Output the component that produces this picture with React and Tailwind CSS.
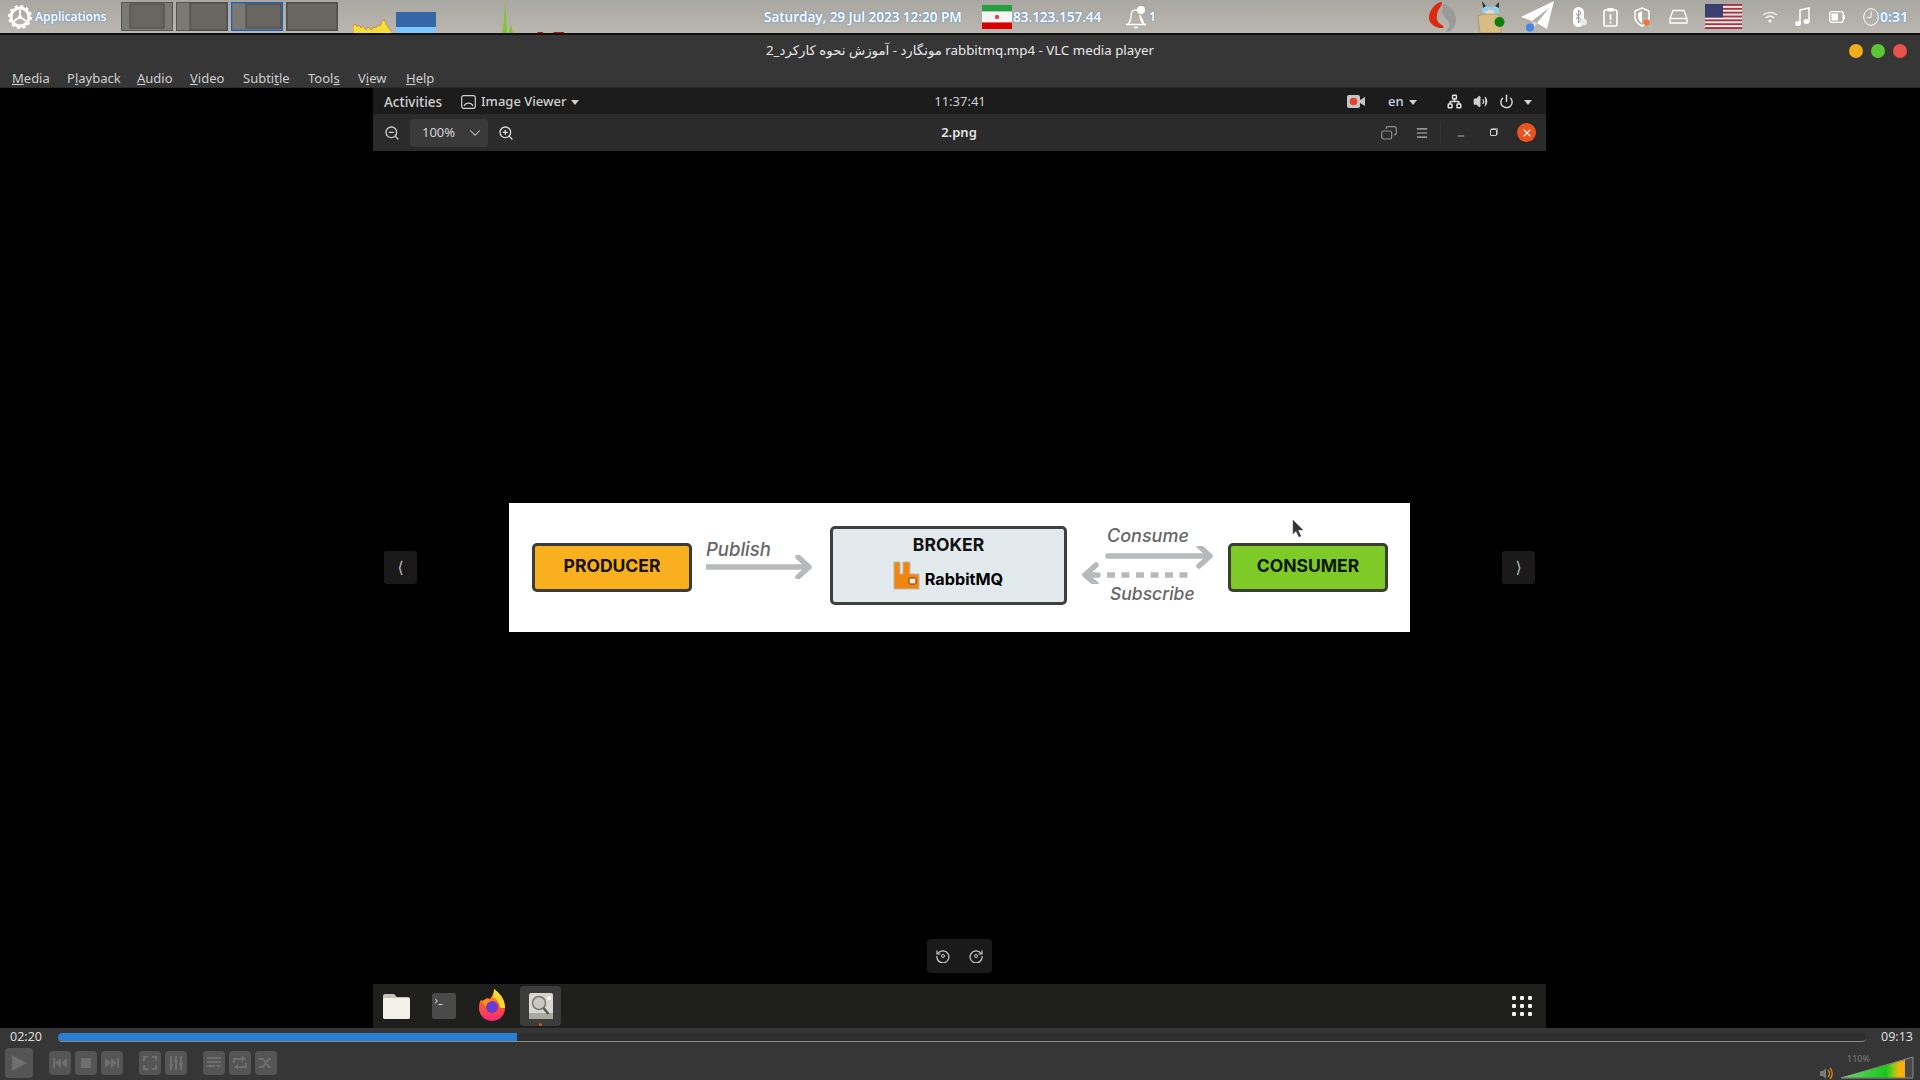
import React from "react";
import { ZoomIn, ZoomOut, ChevronDown, Menu as MenuIcon, X, Minus, Volume2, Power, Network } from "lucide-react";

const Gear = () => (
  <svg width="24" height="26" viewBox="0 0 24 26" fill="none" className="ml-[8px] shrink-0">
    <circle cx="12" cy="13" r="9" stroke="#fff" strokeWidth="3" />
    <circle cx="12" cy="13" r="11" stroke="#fff" strokeWidth="2" strokeDasharray="3 2.76" />
    <path d="M12 13V6M12 13l6 4M12 13l-6 4" stroke="#fff" strokeWidth="2" />
    <circle cx="12" cy="13" r="2" fill="#fff" />
  </svg>
);

const Workspace = ({ active, x, y, w, h }) => (
  <svg width="52" height="29" viewBox="0 0 52 29" className="shrink-0">
    <rect x="0.5" y="0.5" width="51" height="28" fill="#7b7974" stroke={active ? "#1f5fc0" : "#565552"} strokeWidth={active ? 1.5 : 1} />
    <rect x={x} y={y} width={w} height={h} fill="#686661" stroke="#4a4946" strokeWidth="1" />
  </svg>
);

const Graphs = () => (
  <svg width="212" height="35" viewBox="0 0 212 35" className="ml-[15px] self-start shrink-0">
    <path d="M0 35V26L2 24L4 27L6 25L8 28L10 26L13 30L15 27L17 29L19 30L21 27L23 28L25 25L27 26L29 22L31 19L33 24L35 27L37 30L39 32L40 35z" fill="#f7df3a" stroke="#d9662a" strokeWidth="0.6" />
    <rect x="43" y="12" width="40" height="15" fill="#3566a8" />
    <rect x="43" y="27" width="40" height="8" fill="#7cc8fb" />
    <path d="M148 35l2-6 1-10 1-19 1 14 1 18 1 3 2-7 1-4 1 4 2 7z" fill="#82c627" />
    <path d="M142 35h3l1-2 1 2zM172 35v-2h12l1-1h5v1h10l1-1h10v3z" fill="#c40d0d" />
    <rect x="0" y="33.5" width="212" height="1.5" fill="#000" opacity="0.15" />
  </svg>
);

const IranFlag = () => (
  <svg width="30" height="24" viewBox="0 0 30 24" className="ml-[22px] shrink-0">
    <rect width="30" height="6.5" fill="#239f40" />
    <rect y="6.5" width="30" height="11" fill="#f4f4f4" />
    <rect y="17.5" width="30" height="6.5" fill="#da0000" />
    <circle cx="15" cy="12" r="2.2" fill="#da4a4a" />
  </svg>
);

const Bell = () => (
  <svg width="22" height="24" viewBox="0 0 22 24" fill="none" className="ml-[23px] shrink-0">
    <path d="M3 19c2-2 3-4 3-8s2-6 5-6c1 0 2 .3 3 1M15 10c0 4 1 7 4 9z" stroke="#fff" strokeWidth="1.3" />
    <path d="M1 19.5h20M9 22.5h4" stroke="#fff" strokeWidth="1.3" />
    <circle cx="16" cy="5" r="4" fill="#fff" />
  </svg>
);

const Swirl = () => (
  <svg width="29" height="32" viewBox="0 0 29 32" className="ml-[274px] shrink-0">
    <path d="M16 3c5 1 12 7 12 16 0 7-5 12-9 12-1 0-1-1 0-2 3-3 3-6 1-9-2-3-5-5-6-9 0-3 1-8 2-8z" fill="#9b9a97" />
    <path d="M13 1C6 3 1 10 1 17c0 5 5 9 11 10 4 .5 5-1 2-3-4-2-6-5-5-9 0-5 3-8 5-12 0-1 0-2-1-2z" fill="#dc2a10" />
  </svg>
);

const BoxGirl = () => (
  <svg width="28" height="32" viewBox="0 0 28 32" className="ml-[21px] shrink-0">
    <path d="M4 1l4 5h8l5-4v8l-3 9H7L4 10z" fill="#8fd0ea" />
    <path d="M4 0l4 5-3 2zM21 1l-4 4 4 2z" fill="#3c3030" />
    <ellipse cx="12" cy="13" rx="5" ry="4" fill="#f2d8cc" />
    <path d="M0 15l5-2h13l5 3v16H2z" fill="#d8bd82" stroke="#9c8555" strokeWidth="0.6" />
    <circle cx="21.5" cy="21" r="5" fill="#0c7d0c" />
  </svg>
);

const Telegram = () => (
  <svg width="34" height="31" viewBox="0 0 34 31" className="ml-[15px] shrink-0">
    <path d="M0 16L33 0l-7 28-10-6 12-15-17 13z" fill="#fff" />
    <path d="M11 20l3 6 2-4z" fill="#dcdcdc" />
    <circle cx="9" cy="26.5" r="4" fill="#4286ec" />
  </svg>
);

const Bt = () => (
  <svg width="14" height="22" viewBox="0 0 14 22" className="ml-[18px] shrink-0">
    <rect x="0" y="1" width="11" height="20" rx="5.5" fill="#fff" />
    <path d="M3 7l5 7-2.500 3V4l2.500 3-5 6" stroke="#9a9994" strokeWidth="1" fill="none" />
    <circle cx="10.500" cy="16" r="3.500" fill="#e8e8e8" />
  </svg>
);

const Clip = () => (
  <svg width="15" height="20" viewBox="0 0 15 20" fill="none" className="ml-[16px] shrink-0">
    <rect x="1" y="3" width="13" height="16" rx="1.500" stroke="#fff" strokeWidth="1.600" />
    <rect x="4.500" y="1" width="6" height="3.500" fill="#fff" />
    <path d="M7.500 7v6M7.500 14.500v2" stroke="#fff" strokeWidth="1.800" />
  </svg>
);

const Shield = () => (
  <svg width="16" height="20" viewBox="0 0 16 20" fill="none" className="ml-[16px] shrink-0">
    <path d="M8 1l7 3v6c0 4-3 7-7 9-4-2-7-5-7-9V4z" stroke="#fff" strokeWidth="1.500" />
    <path d="M8 4v12c-3-2-4-4-4-7V6z" fill="#fff" />
    <circle cx="12.500" cy="15.500" r="3" fill="#f0752f" />
  </svg>
);

const Disk = () => (
  <svg width="19" height="16" viewBox="0 0 19 16" fill="none" className="ml-[19px] shrink-0">
    <path d="M4 1.500h11l3 8v4.500H1V9.500z" stroke="#fff" strokeWidth="1.300" />
    <path d="M1 9.500h17" stroke="#fff" strokeWidth="1.300" />
  </svg>
);

const UsFlag = () => {
  const stripes = [0, 2, 4, 6, 8, 10, 12];
  return (
    <svg width="37" height="25" viewBox="0 0 37 25" className="ml-[17px] shrink-0">
      <rect width="37" height="25" rx="2" fill="#eee" />
      {stripes.map((s) => (
        <rect key={s} y={s * 1.923} width="37" height="1.923" fill="#a8343f" />
      ))}
      <rect width="18" height="13.500" fill="#3c3f70" />
    </svg>
  );
};

const Wifi = () => (
  <svg width="16" height="12" viewBox="0 0 16 12" fill="none" className="ml-[20px] shrink-0">
    <path d="M1 4c4-3.500 10-3.500 14 0M3.500 7c3-2.500 6-2.500 9 0" stroke="#eee" strokeWidth="1.500" />
    <circle cx="8" cy="10" r="1.500" fill="#fff" />
  </svg>
);

const Note = () => (
  <svg width="15" height="20" viewBox="0 0 15 20" fill="none" className="ml-[17px] shrink-0">
    <path d="M5 16V3l9-2v13" stroke="#fff" strokeWidth="1.500" />
    <ellipse cx="3" cy="16.500" rx="3" ry="2.500" fill="#fff" />
    <ellipse cx="11.500" cy="14.500" rx="3" ry="2.500" fill="#fff" />
  </svg>
);

const Batt = () => (
  <svg width="16" height="12" viewBox="0 0 16 12" fill="none" className="ml-[19px] shrink-0">
    <rect x="0.700" y="0.700" width="13.500" height="10.600" rx="2" stroke="#fff" strokeWidth="1.300" />
    <rect x="2.500" y="2.500" width="6.500" height="7" fill="#fff" />
    <rect x="14.500" y="4" width="1.500" height="4" fill="#fff" />
  </svg>
);

const ClockIcon = () => (
  <svg width="16" height="18" viewBox="0 0 16 18" fill="none" className="ml-[18px] shrink-0">
    <ellipse cx="8" cy="9" rx="7.300" ry="8.300" stroke="#fff" strokeWidth="1" />
    <path d="M8 3.500V9.500H3.500" stroke="#fff" strokeWidth="1" />
  </svg>
);

const TopPanel = () => (
  <div className="h-[33px] flex items-center bg-gradient-to-b from-[#a9a7a1] to-[#bab7b0] font-['Open_Sans','DejaVu_Sans',sans-serif] [text-shadow:0_0_2px_#3f8fdf] text-white">
    <Gear />
    <span className="ml-[3px] w-[71px] text-[12px] font-semibold whitespace-nowrap">Applications</span>
    <div className="ml-[15px] flex gap-[3px]">
      <Workspace x={9} y={2} w={34} h={24} />
      <Workspace x={14} y={1} w={37} h={27} />
      <Workspace active x={15} y={2} w={35} h={24} />
      <Workspace x={1} y={1} w={50} h={27} />
    </div>
    <Graphs />
    <span className="ml-[199px] w-[196px] text-[13.500px] font-semibold whitespace-nowrap pt-[1px]">Saturday, 29 Jul 2023 12:20 PM</span>
    <IranFlag />
    <span className="ml-[1px] w-[89px] text-[13.500px] font-semibold pt-[1px]">83.123.157.44</span>
    <Bell />
    <span className="ml-[2px] w-[5px] text-[12px] font-semibold">1</span>
    <Swirl />
    <BoxGirl />
    <Telegram />
    <Bt />
    <Clip />
    <Shield />
    <Disk />
    <UsFlag />
    <Wifi />
    <Note />
    <Batt />
    <ClockIcon />
    <span className="ml-[1px] text-[14px] font-bold text-[#e4f2ff] whitespace-nowrap">0:31</span>
  </div>
);

const Dot = ({ c }) => <span className={c} />;

const TitleBar = () => (
  <div className="relative h-[31px] flex items-center justify-center text-[13.300px] text-[#e8e8e8]">
    <span dir="ltr" className="font-['Noto_Sans','DejaVu_Sans',sans-serif] pt-[1px]">مونگارد - آموزش نحوه کارکرد_2 rabbitmq.mp4 - VLC media player</span>
    <div className="absolute right-[13px] top-[9px] flex gap-[8px]">
      <Dot c="w-[14px] h-[14px] rounded-full bg-[#f0ae19]" />
      <Dot c="w-[14px] h-[14px] rounded-full bg-[#5bc734]" />
      <Dot c="w-[14px] h-[14px] rounded-full bg-[#e9524f]" />
    </div>
  </div>
);

const MenuBar = () => (
  <div className="h-[22px] pt-[4px] border-b border-[#2b2b2b] flex items-center pl-[12px] gap-[19px] text-[13px] text-[#cfcfcf] font-['Noto_Sans',sans-serif]">
    <span className="w-[36px]"><span className="underline">M</span>edia</span>
    <span className="w-[51px] whitespace-nowrap">P<span className="underline">l</span>ayback</span>
    <span className="w-[34px]"><span className="underline">A</span>udio</span>
    <span className="w-[34px]"><span className="underline">V</span>ideo</span>
    <span className="w-[46px]">Subti<span className="underline">t</span>le</span>
    <span className="w-[31px]">Tool<span className="underline">s</span></span>
    <span className="w-[29px]">V<span className="underline">i</span>ew</span>
    <span className="w-[27px]"><span className="underline">H</span>elp</span>
  </div>
);

const Caret = () => (
  <svg width="8" height="5" viewBox="0 0 8 5" className="shrink-0"><path d="M0 0h8L4 5z" fill="#cfcfcf" /></svg>
);

const ActivitiesBar = () => (
  <div className="h-[26px] pt-[2px] bg-[#1c1c1c] flex items-center relative text-[13px] font-medium text-[#d2d2d2] font-['Noto_Sans',sans-serif]">
    <span className="ml-[11px] w-[58px] whitespace-nowrap text-[13.500px]">Activities</span>
    <svg width="15" height="14" viewBox="0 0 15 14" fill="none" className="ml-[19px]">
      <rect x="0.700" y="0.700" width="13.600" height="12.600" rx="2" stroke="#cfcfcf" strokeWidth="1.200" />
      <path d="M3 11a5 5 0 0 1 9 0" stroke="#cfcfcf" strokeWidth="1.200" />
    </svg>
    <span className="ml-[5px] w-[84px] whitespace-nowrap">Image Viewer</span>
    <span className="ml-[6px]"><Caret /></span>
    <span className="absolute left-[557px] top-[4px] w-[60px] text-center font-normal text-[13px]">11:37:41</span>
    <div className="ml-auto flex items-center pr-[14px]">
      <svg width="18" height="13" viewBox="0 0 18 13" className="mt-[-2px] ml-[1px]">
        <rect width="13" height="13" rx="2" fill="#c5c5c5" />
        <circle cx="6.500" cy="6.500" r="3.800" fill="#e8402a" />
        <path d="M13 5l5-3v9l-5-3z" fill="#c5c5c5" />
      </svg>
      <span className="ml-[23px] w-[15px] text-[13px] text-[#c9d6e4]">en</span>
      <span className="ml-[6px]"><Caret /></span>
      <Network size={15} color="#e0e0e0" strokeWidth={2.400} className="ml-[30px] mt-[-2px]" />
      <Volume2 size={15} color="#d0d0d0" fill="#d0d0d0" className="ml-[11px] mt-[-2px]" />
      <Power size={15} color="#e0e0e0" strokeWidth={2.200} className="ml-[11px] mt-[-2px]" />
      <span className="ml-[10px]"><Caret /></span>
    </div>
  </div>
);

const RestoreIcon = () => (
  <svg width="16" height="14" viewBox="0 0 16 14" fill="none">
    <rect x="0.700" y="5" width="10" height="8" rx="2" stroke="#8f8f8f" strokeWidth="1.200" />
    <path d="M5 3V2.500A1.800 1.800 0 0 1 6.800 .7H13.500A1.800 1.800 0 0 1 15.300 2.500V7A1.800 1.800 0 0 1 13.500 8.800H13" stroke="#8f8f8f" strokeWidth="1.200" />
  </svg>
);

const HeaderBar = () => (
  <div className="h-[37px] bg-[#2b2b2b] flex items-center relative text-[13px] text-[#d5d5d5] font-['Noto_Sans',sans-serif]">
    <ZoomOut size={16} color="#cfcfcf" className="ml-[11px]" />
    <div className="ml-[10px] w-[78px] h-[28px] rounded-[4px] bg-[#3a3a3a] flex items-center pl-[12px]">
      <span className="w-[33px]">100%</span>
      <ChevronDown size={18} color="#cfcfcf" strokeWidth={1.400} className="ml-[11px]" />
    </div>
    <ZoomIn size={16} color="#dcdcdc" className="ml-[10px]" />
    <span className="absolute left-[556px] top-[9px] w-[60px] text-center font-semibold text-[#e4e4e4]">2.png</span>
    <div className="ml-auto flex items-center pr-[10px]">
      <RestoreIcon />
      <MenuIcon size={14} color="#bcbcbc" className="ml-[18px]" />
      <span className="ml-[11px] w-px h-[20px] bg-[#333]" />
      <Minus size={10} color="#cfcfcf" strokeWidth={2} className="ml-[15px] mt-[6px]" />
      <span className="ml-[24px] w-[7px] h-[7px] border border-[#cfcfcf] rounded-[1px] shadow-[1px_-1px_0_#8a8a8a]" />
      <span className="ml-[20px] w-[19px] h-[19px] rounded-full bg-[#e95420] flex items-center justify-center">
        <X size={12} color="#fff" strokeWidth={2.200} />
      </span>
    </div>
  </div>
);

const ArrowRight = () => (
  <svg width="108" height="24" viewBox="0 0 108 24" fill="none" className="block">
    <path d="M1 12h102M92 2l11 10-11 10" stroke="#b7babc" strokeWidth="5.500" strokeLinecap="round" strokeLinejoin="round" />
  </svg>
);

const ConsumeArrows = () => (
  <svg width="132" height="38" viewBox="0 0 132 38" fill="none" className="block">
    <path d="M27 10h102M118 0l11 10-11 10" stroke="#b7babc" strokeWidth="5.500" strokeLinecap="round" strokeLinejoin="round" />
    <path d="M4 29l11-10M4 29l11 9M4 29h13" stroke="#b7babc" strokeWidth="5.500" strokeLinecap="round" strokeLinejoin="round" />
    <path d="M26 29h82" stroke="#b7babc" strokeWidth="5.500" strokeDasharray="8 6.500" />
  </svg>
);

const RabbitLogo = () => (
  <svg width="27" height="29" viewBox="0 0 27 29" className="shrink-0">
    <path d="M1 1h6v12h3V1h7v12h9v15H1z" fill="#f0860f" stroke="#b8b8b0" strokeWidth="1" />
    <rect x="16" y="17" width="7" height="6" rx="1" fill="#f3e8d5" stroke="#6d3f0a" strokeWidth="1" />
  </svg>
);

const Cursor = () => (
  <svg width="13" height="18" viewBox="0 0 13 18" className="absolute left-[783px] top-[17px]">
    <path d="M1 0v14l3-3 3 6 2-1-3-6h5z" fill="#333" stroke="#666" strokeWidth="0.500" />
  </svg>
);

const Diagram = () => (
  <div className="relative w-[901px] h-[129px] bg-white flex items-center font-['Inter',sans-serif]">
    <div className="ml-[23px] w-[160px] h-[49px] mb-[1px] border-[3px] border-[#3c3c38] rounded-[5px] bg-[#f8b01e] flex items-center justify-center text-[17.500px] font-bold text-[#15130c] pb-[1px]">PRODUCER</div>
    <div className="ml-[14px] w-[106px] self-start pt-[36px] flex flex-col">
      <span className="h-[20px] leading-[20px] text-[18.500px] italic font-medium text-[#666]">Publish</span>
      <span className="-mt-[4px]"><ArrowRight /></span>
    </div>
    <div className="ml-[18px] w-[237px] h-[79px] mb-[5px] border-[3px] border-[#3f3f3f] rounded-[5px] bg-[#e1e9ec] flex flex-col items-center text-black font-bold">
      <span className="mt-[5px] text-[17.500px] leading-[22px] text-[#111]">BROKER</span>
      <span className="mt-[4px] flex items-center gap-[5px] ml-[-1px]">
        <RabbitLogo />
        <span className="text-[16.200px] mt-[7px]">RabbitMQ</span>
      </span>
    </div>
    <div className="ml-[14px] w-[131px] self-start pt-[23px] flex flex-col">
      <span className="ml-[26px] h-[20px] leading-[20px] text-[18px] italic font-medium text-[#666]">Consume</span>
      <ConsumeArrows />
      <span className="ml-[29px] h-[20px] leading-[20px] text-[17.500px] italic font-medium text-[#666]">Subscribe</span>
    </div>
    <div className="ml-[16px] w-[160px] h-[49px] mb-[1px] border-[3px] border-[#3a3f30] rounded-[5px] bg-[#7ecb27] flex items-center justify-center text-[17.500px] font-bold text-[#0d1508] pb-[1px]">CONSUMER</div>
    <Cursor />
  </div>
);

const RotateIcon = ({ flip }) => (
  <svg width="14" height="14" viewBox="0 0 14 14" fill="none" className={flip ? "-scale-x-100" : ""}>
    <path d="M2 4.500A6 6 0 1 1 1 7" stroke="#cfcfcf" strokeWidth="1.200" />
    <path d="M1 1.500v3.500h3.500" stroke="#cfcfcf" strokeWidth="1.200" />
    <circle cx="7" cy="7" r="1.500" stroke="#cfcfcf" strokeWidth="1" />
  </svg>
);

const NavBtn = ({ cls, ch }) => (
  <div className={"absolute top-[400px] w-[33px] h-[33px] rounded-[3px] bg-[#1a1a1a] flex items-center justify-center " + cls}>
    {ch}
  </div>
);

const Folder = () => (
  <svg width="27" height="25" viewBox="0 0 27 25">
    <path d="M2 0h9l3 3h11a2 2 0 0 1 2 2v18a2 2 0 0 1-2 2H2a2 2 0 0 1-2-2V2a2 2 0 0 1 2-2z" fill="#c4c3b8" />
    <rect y="4" width="27" height="21" rx="2" fill="#f1f1e8" />
  </svg>
);

const Term = () => (
  <svg width="24" height="26" viewBox="0 0 24 26">
    <rect width="24" height="26" rx="2.500" fill="#4a4a4a" />
    <path d="M3 6l2.500 2L3 10" stroke="#ddd" strokeWidth="1" fill="none" />
    <path d="M6.500 11.500h4" stroke="#ddd" strokeWidth="1" />
  </svg>
);

const Firefox = () => (
  <svg width="27" height="33" viewBox="0 0 27 33">
    <defs>
      <linearGradient id="ff1" x1="0" y1="0" x2="0" y2="1">
        <stop offset="0" stopColor="#ffb01f" />
        <stop offset="0.500" stopColor="#ff5a27" />
        <stop offset="1" stopColor="#f0277f" />
      </linearGradient>
    </defs>
    <path d="M15 0c5 4 11 9 11 19a13 13 0 0 1-26 0c0-4 1-7 2-8 1 1 2 1 3 0 2-2 4-2 6-1 2-3 4-6 4-10z" fill="url(#ff1)" />
    <path d="M15 0c5 4 11 9 11 19l-5 0c0-6-4-9-7-11 1-3 1-5 1-8z" fill="#ffd92e" />
    <circle cx="13" cy="18" r="6" fill="#6a3bd0" />
    <path d="M3 13c3-3 7-3 9-1-3 1-5 3-5 6z" fill="#ff8f1f" />
  </svg>
);

const Viewer = () => (
  <svg width="24" height="26" viewBox="0 0 24 26" fill="none">
    <rect width="24" height="26" rx="2" fill="#d8d7cc" />
    <rect y="20" width="24" height="6" fill="#aaa99f" />
    <circle cx="10" cy="10" r="6.500" fill="#c9c8be" stroke="#777" strokeWidth="1.500" />
    <path d="M14.500 15l5 6" stroke="#555" strokeWidth="2.500" />
    <circle cx="20" cy="5" r="2" fill="#fff" />
  </svg>
);

const GridIcon = () => {
  const dots = [0, 1, 2, 3, 4, 5, 6, 7, 8];
  return (
    <div className="grid grid-cols-3 gap-[4px] w-[20px]">
      {dots.map((d) => (
        <span key={d} className="w-[4px] h-[4px] rounded-[1px] bg-[#f0f0f0]" />
      ))}
    </div>
  );
};

const Dock = () => (
  <div className="h-[44px] bg-[#1f1f1d] flex items-center">
    <span className="ml-[10px]"><Folder /></span>
    <span className="ml-[22px]"><Term /></span>
    <span className="ml-[23px] -mt-[1px]"><Firefox /></span>
    <div className="relative ml-[14px] w-[41px] h-[40px] rounded-[4px] bg-[#3c3c3c] flex items-center justify-center">
      <Viewer />
      <span className="absolute bottom-0 left-[19px] w-[3px] h-[3px] rounded-full bg-[#e95420]" />
    </div>
    <span className="ml-auto mr-[14px]"><GridIcon /></span>
  </div>
);

const Screen = () => (
  <div className="ml-[373px] w-[1173px] flex-1 flex flex-col min-h-0">
    <ActivitiesBar />
    <HeaderBar />
    <div className="relative flex-1 flex items-center justify-center bg-black">
      <Diagram />
      <NavBtn cls="left-[11px]" ch={<span className="text-[#bbb] text-[16px] font-['DejaVu_Sans',sans-serif]">⟨</span>} />
      <NavBtn cls="right-[11px]" ch={<span className="text-[#bbb] text-[16px] font-['DejaVu_Sans',sans-serif]">⟩</span>} />
      <div className="absolute left-[554px] top-[788px] w-[65px] h-[34px] rounded-[4px] bg-[#1a1a1a] flex items-center justify-center gap-[19px]">
        <RotateIcon />
        <RotateIcon flip />
      </div>
    </div>
    <Dock />
  </div>
);

const Ctrl = ({ children, cls }) => (
  <span className={"w-[22px] h-[24px] rounded-[4px] bg-[#555] flex items-center justify-center " + (cls || "")}>{children}</span>
);

const G = "#6f6f6f";

const Bottom = () => (
  <div className="h-[52px] bg-[#363636] flex flex-col font-['Noto_Sans',sans-serif]">
    <div className="h-[18px] flex items-center">
      <span className="ml-[10px] w-[48px] text-[12.500px] text-[#dcdcdc]">02:20</span>
      <div className="flex-1 h-[9px] rounded-[4px] bg-[#2f2f2f] border-b border-[#8a8a8a] overflow-hidden">
        <div className="w-[459px] h-full bg-[#2a7fd5] rounded-l-[4px]" />
      </div>
      <span className="ml-[15px] w-[39px] text-[12.500px] text-[#dcdcdc]">09:13</span>
    </div>
    <div className="flex-1 flex items-center relative">
      <span className="ml-[5px] w-[28px] h-[30px] rounded-[4px] bg-[#555] flex items-center justify-center">
        <svg width="15" height="16" viewBox="0 0 15 16"><path d="M0 0l15 8L0 16z" fill={G} /></svg>
      </span>
      <div className="ml-[16px] flex gap-[4px]">
        <Ctrl><svg width="14" height="10" viewBox="0 0 14 10"><path d="M0 0h2v10H0zM8 0v10L2 5zM14 0v10L8 5z" fill={G} /></svg></Ctrl>
        <Ctrl><span className="w-[10px] h-[10px] bg-[#6f6f6f]" /></Ctrl>
        <Ctrl><svg width="14" height="10" viewBox="0 0 14 10"><path d="M14 0h-2v10h2zM6 0v10l6-5zM0 0v10l6-5z" fill={G} /></svg></Ctrl>
      </div>
      <div className="ml-[16px] flex gap-[4px]">
        <Ctrl><svg width="14" height="14" viewBox="0 0 14 14" fill="none"><path d="M1 5V1h4M9 1h4v4M13 9v4H9M5 13H1V9" stroke={G} strokeWidth="2" /></svg></Ctrl>
        <Ctrl><svg width="14" height="14" viewBox="0 0 14 14" fill="none"><path d="M2 0v14M7 0v14M12 0v14" stroke={G} strokeWidth="2" /><path d="M0 9h4M5 5h4M10 8h4" stroke={G} strokeWidth="2" /></svg></Ctrl>
      </div>
      <div className="ml-[16px] flex gap-[4px]">
        <Ctrl><svg width="14" height="14" viewBox="0 0 14 14" fill="none"><path d="M0 2h14M0 6h14M0 10h8" stroke={G} strokeWidth="2" /><path d="M9 9h5l-2.500 3z" fill={G} /></svg></Ctrl>
        <Ctrl><svg width="14" height="14" viewBox="0 0 14 14" fill="none"><path d="M1 7V3h10M13 7v4H3" stroke={G} strokeWidth="2" /><path d="M9 0l4 3-4 3zM5 8l-4 3 4 3z" fill={G} /></svg></Ctrl>
        <Ctrl><svg width="14" height="14" viewBox="0 0 14 14" fill="none"><path d="M0 3h4l6 8h2M0 11h4l6-8h2" stroke={G} strokeWidth="2" /></svg></Ctrl>
      </div>
      <div className="ml-auto flex items-end h-[30px] pr-[6px] relative">
        <svg width="14" height="13" viewBox="0 0 14 13" fill="none" className="mb-[-2px]">
          <path d="M0 4h3l3-3v11L3 9H0z" fill="#7a7a7a" />
          <path d="M8 3a5 5 0 0 1 0 7M10 1a8 8 0 0 1 0 11" stroke="#e08a10" strokeWidth="1.300" />
        </svg>
        <span className="absolute right-[50px] top-[4px] text-[9px] text-[#7c7c7c]">110%</span>
        <svg width="74" height="23" viewBox="0 0 74 23" className="ml-[6px] mb-[-1px]">
          <defs>
            <linearGradient id="vol" x1="0" y1="0" x2="1" y2="0">
              <stop offset="0" stopColor="#6fd36a" />
              <stop offset="0.700" stopColor="#17c71d" />
              <stop offset="0.820" stopColor="#8fc916" />
              <stop offset="0.900" stopColor="#f7b10f" />
            </linearGradient>
          </defs>
          <path d="M1 22L73 1v21z" fill="#484848" stroke="#8a8a8a" strokeWidth="1" />
          <path d="M2 21.500L65 4v17.500z" fill="url(#vol)" />
        </svg>
      </div>
    </div>
  </div>
);

export default function App() {
  return (
    <div className="w-[1920px] h-[1080px] overflow-hidden flex flex-col bg-black">
      <TopPanel />
      <div className="h-[2px] bg-[#111]" />
      <div className="bg-[#363636]">
        <TitleBar />
        <MenuBar />
      </div>
      <Screen />
      <Bottom />
    </div>
  );
}
